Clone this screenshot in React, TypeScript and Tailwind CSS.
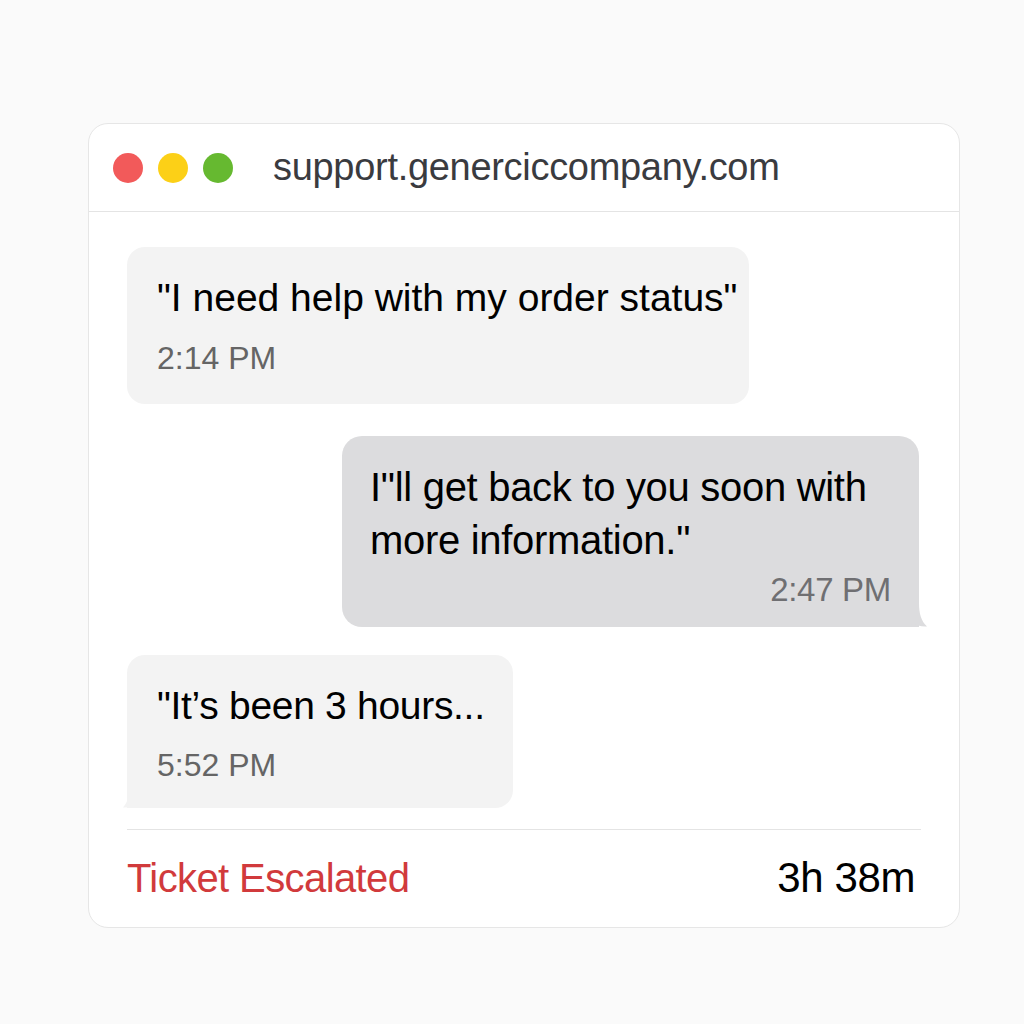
const FONT = { fontFamily: '"Liberation Sans", Arial, sans-serif' };

function TailRight({ color }: { color: string }) {
  return (
    <svg className="absolute -right-[9px] bottom-0" width="22" height="24" viewBox="0 0 22 24">
      <path d="M0 0 L13 0 C13 10 15 18 21 23.5 C15 24 10 22 7 20 C4 23 0 24 0 24 Z" fill={color} />
    </svg>
  );
}

function TailLeft({ color }: { color: string }) {
  return (
    <svg className="absolute -left-[5px] bottom-0" width="22" height="24" viewBox="0 0 22 24">
      <path d="M22 0 L8 0 C8 10 6 18 1 23.5 C7 24 12 22 15 20 C18 23 22 24 22 24 Z" fill={color} />
    </svg>
  );
}

export default function App() {
  return (
    <div className="min-h-[1024px] w-[1024px] bg-[#fafafa] pt-[123px] pl-[88px]" style={FONT}>
      <div className="w-[872px] h-[805px] bg-white rounded-[20px] border border-[#e6e6e6] flex flex-col">
        <div className="h-[88px] flex items-center px-[24px] border-b border-[#e4e4e4] shrink-0">
          <div className="flex gap-[15px]">
            <span className="w-[30px] h-[30px] rounded-full bg-[#f25a5a]" />
            <span className="w-[30px] h-[30px] rounded-full bg-[#fcd017]" />
            <span className="w-[30px] h-[30px] rounded-full bg-[#66b930]" />
          </div>
          <span className="ml-[40px] text-[38px] text-[#3a3b3f] tracking-[-0.3px]">support.generciccompany.com</span>
        </div>

        <div className="flex-1 flex flex-col px-[38px] pt-[35px]">
          <div className="w-[622px] h-[157px] bg-[#f3f3f3] rounded-[18px] pl-[30px] pt-[29px]">
            <div className="text-[39px] leading-[44px] text-black">"I need help with my order status"</div>
            <div className="mt-[19px] text-[32px] leading-[38px] text-[#656565]">2:14 PM</div>
          </div>

          <div className="self-end mr-[2px] mt-[32px] relative w-[577px] h-[191px] bg-[#dcdcde] rounded-[20px] rounded-br-[0px] px-[28px] pt-[25px]">
            <div className="text-[40px] leading-[53px] text-black tracking-[-0.3px]">
              I"ll get back to you soon with<br />more information."
            </div>
            <div className="text-right mt-[4px] text-[33px] leading-[38px] text-[#6f6f72] tracking-[-0.3px]">2:47 PM</div>
            <TailRight color="#dcdcde" />
          </div>

          <div className="mt-[28px] relative w-[386px] h-[153px] bg-[#f3f3f3] rounded-[18px] rounded-bl-[0px] pl-[30px] pt-[29px]">
            <div className="text-[39px] leading-[44px] text-black tracking-[-0.3px]">"It’s been 3 hours...</div>
            <div className="mt-[18px] text-[32px] leading-[38px] text-[#656565]">5:52 PM</div>
            <TailLeft color="#f3f3f3" />
          </div>

          <div className="mt-[21px] border-t border-[#e4e4e4] flex items-center justify-between h-[98px] pb-[2px]">
            <span className="text-[40px] text-[#d13a3c] tracking-[-0.6px]">Ticket Escalated</span>
            <span className="text-[42px] text-black tracking-[-0.4px] mr-[6px]">3h 38m</span>
          </div>
        </div>
      </div>
    </div>
  );
}
